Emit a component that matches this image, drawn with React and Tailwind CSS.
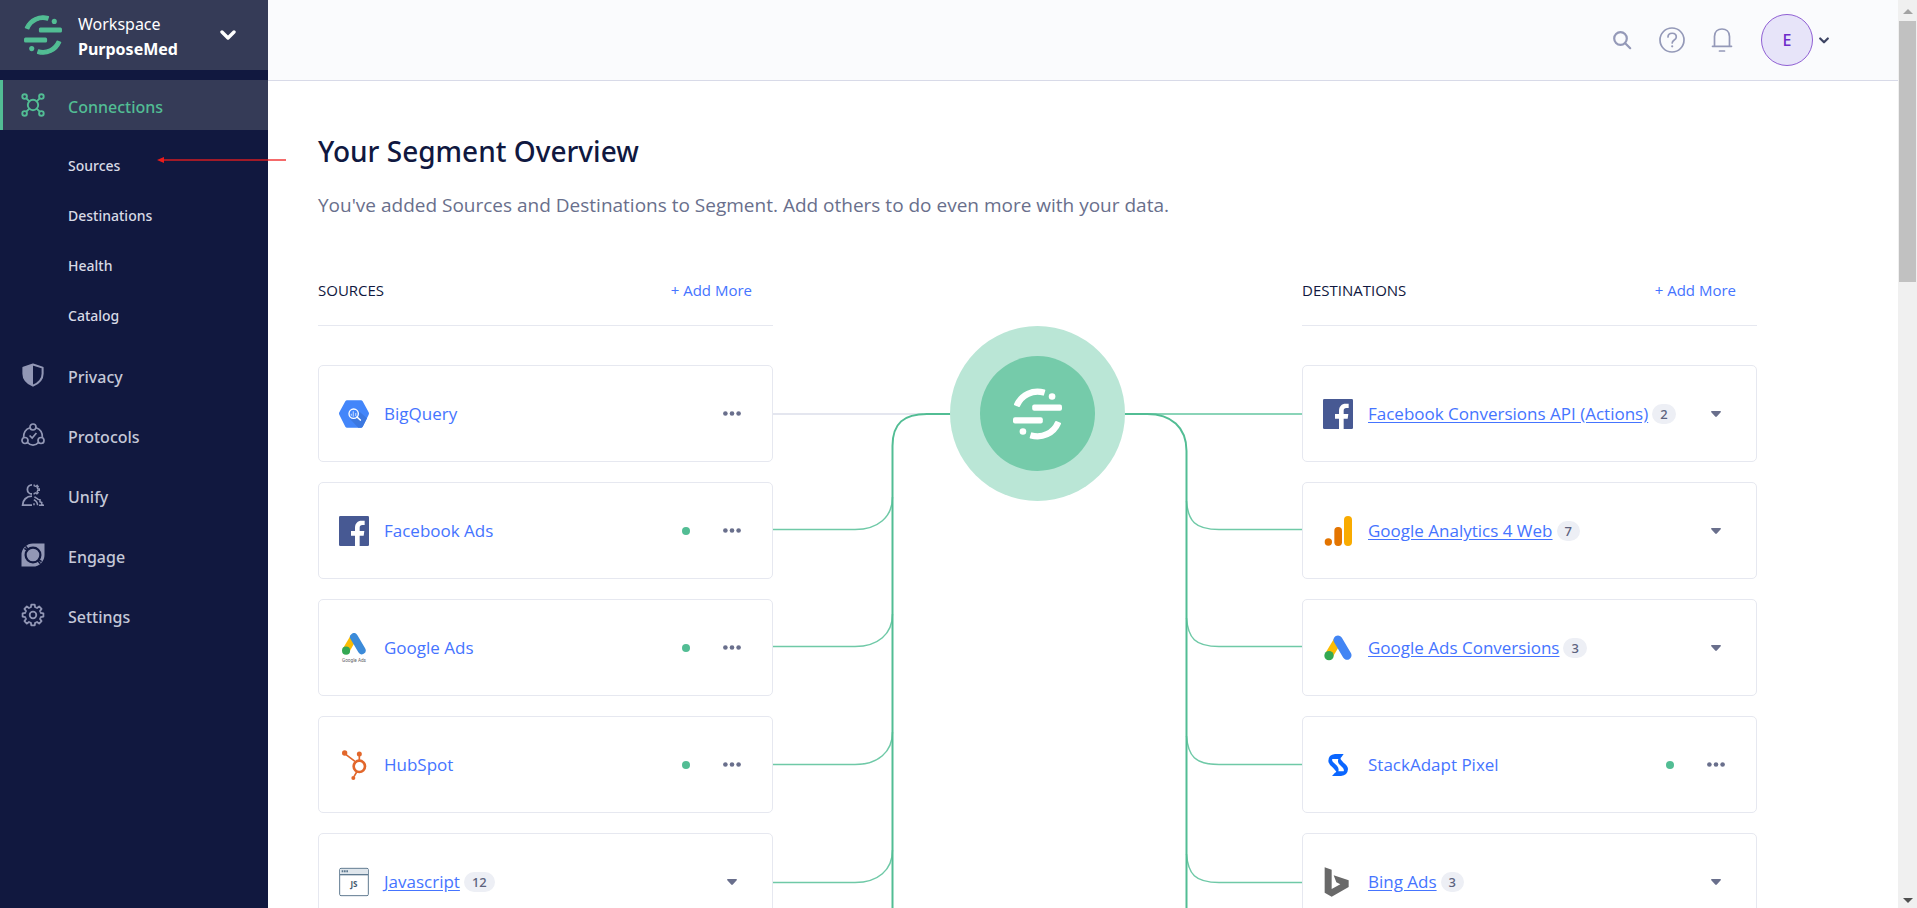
import React from "react";

function SegmentMark({ className }) {
  return (
    <svg viewBox="0 0 148 156" fill="currentColor" stroke="currentColor" className={className} aria-hidden="true">
      <g strokeWidth="5" strokeLinejoin="round">
        <path d="M5.4 48.9A74.5 74.5 0 0 1 95.2 6.6L91.2 20A60.5 60.5 0 0 0 18.3 54.4Z" />
        <path d="M142.6 107.1A74.5 74.5 0 0 1 52.8 149.4L56.8 136A60.5 60.5 0 0 0 129.7 101.6Z" />
      </g>
      <g stroke="none">
        <rect x="58" y="49" width="90" height="19" rx="6" />
        <rect x="0" y="88" width="90" height="19" rx="6" />
        <circle cx="118" cy="25" r="10" />
        <circle cx="30" cy="131" r="10" />
      </g>
    </svg>
  );
}

function ConnectionsIcon() {
  return (
    <svg viewBox="0 0 24 24" fill="none" stroke="currentColor" strokeWidth="1.9" className="size-6" aria-hidden="true">
      <circle cx="12" cy="12" r="5.2" />
      <circle cx="3.6" cy="3.6" r="2.3" />
      <circle cx="20.4" cy="3.6" r="2.3" />
      <circle cx="3.6" cy="20.4" r="2.3" />
      <circle cx="20.4" cy="20.4" r="2.3" />
      <path d="M5.3 5.3l3 3M18.7 5.3l-3 3M5.3 18.7l3-3M18.7 18.7l-3-3" />
    </svg>
  );
}

function PrivacyIcon() {
  return (
    <svg viewBox="0 0 24 26" className="size-6" aria-hidden="true">
      <path d="M12 1.6L22.4 5v6.6c0 5.8-4.4 10.3-10.4 12.9C6 21.9 1.6 17.4 1.6 11.6V5z" fill="none" stroke="currentColor" strokeWidth="2.2" strokeLinejoin="round" />
      <path d="M12 1.6L1.6 5v6.6c0 5.8 4.4 10.3 10.4 12.9z" fill="currentColor" />
    </svg>
  );
}

function ProtocolsIcon() {
  return (
    <svg viewBox="0 0 24 24" fill="none" stroke="currentColor" strokeWidth="1.7" className="size-6" aria-hidden="true">
      <circle cx="12" cy="4" r="3" />
      <circle cx="4" cy="17.5" r="3" />
      <circle cx="20" cy="17.5" r="3" />
      <path d="M9 4.8C5 6.2 2.4 9.600 2.600 14.6M15 4.8c4 1.4 6.6 4.8 6.4 9.8M6.6 19.5c3 3.6 7.8 3.6 10.8 0M8.600 12.5l2.6 2.6 4.2-5.1" />
    </svg>
  );
}

function UnifyIcon() {
  return (
    <svg viewBox="0 0 24 24" fill="none" stroke="currentColor" strokeWidth="1.8" className="size-6" aria-hidden="true">
      <path d="M11 1.8a4.6 4.6 0 0 0 0 9.2" />
      <path d="M13.2 1.5v1.3l1.9.6 1-1 1.1 1.3-1 1 .5 1.2h1.6v1.5h-1.6l-.5 1.2.9 1-1.2 1.2-1-.9-1.7.6v1" strokeWidth="1.4" />
      <path d="M11 13.2C5.4 13.2 1.8 17 1.6 22.2H11" />
      <path d="M13.5 13.6c.8 1.4 3.2 1.6 3.6 2.8l2 .4-.2 2 1.9.8-.2 1.9 1.7.8M12.8 16.8c2 .8 3.6 2.6 3.8 5.4M18 22.2h5M13 20.2v2" strokeWidth="1.5" />
    </svg>
  );
}

function EngageIcon() {
  return (
    <svg viewBox="0 0 24 24" className="size-6" aria-hidden="true">
      <path d="M.5 23.5V12A11.5 11.5 0 0 1 12 .5h11.5V12A11.5 11.5 0 0 1 12 23.5z" fill="currentColor" />
      <circle cx="12" cy="12" r="7.4" fill="none" stroke="#11183f" strokeWidth="2.2" />
      <path d="M3.4 5.4l2.6 1.8M20.6 18.600l-2.600-1.800M4.600 3.200l2.400 2.800M19.400 20.800l-2.400-2.800" stroke="#11183f" strokeWidth="1.6" />
    </svg>
  );
}

function GearIcon() {
  const teeth = [0, 45, 90, 135, 180, 225, 270, 315];
  return (
    <svg viewBox="0 0 24 24" fill="none" stroke="currentColor" strokeWidth="1.8" className="size-6" aria-hidden="true">
      <circle cx="12" cy="12" r="3.3" />
      {teeth.map((a) => (
        <path key={a} transform={`rotate(${a} 12 12)`} d="M8.9 4.5L9.9 4.2L10.3 1.6H13.7L14.1 4.2L15.1 4.5" strokeLinejoin="round" />
      ))}
    </svg>
  );
}

function BigQueryLogo() {
  return (
    <svg viewBox="0 0 90 90" className="size-[30px]" aria-hidden="true">
      <path d="M24 4h42q3 0 5 3l18 33q2 4 0 7L71 83q-2 3-5 3H24q-3 0-5-3L1 47q-2-4 0-7L19 7q2-3 5-3z" fill="#4386fa" />
      <path d="M58 35L84 58 71 83q-2 3-5 3H58L33 60z" fill="#3c78e0" />
      <circle cx="44" cy="44" r="14" fill="#4386fa" stroke="#fff" strokeWidth="4" />
      <path d="M37 44v6M43 37v16M50 42v9" stroke="#a9c8fd" strokeWidth="4" />
      <path d="M54 54l10 9" stroke="#fff" strokeWidth="5" strokeLinecap="round" />
    </svg>
  );
}

function FacebookLogo() {
  return (
    <svg viewBox="0 0 90 90" className="size-[30px]" aria-hidden="true">
      <rect width="90" height="90" rx="4" fill="#475993" />
      <path d="M48 90V59H36V45H48V35C48 22 56 14 68 14H77V27H70Q62 27 62 35V45H76L74 59H62V90z" fill="#fff" />
    </svg>
  );
}

function AdsShape({ blue }) {
  return (
    <>
      <path d="M41 15L15 59" stroke="#fbbc04" strokeWidth="25" />
      <path d="M41 15L68 61" stroke={blue} strokeWidth="27" strokeLinecap="round" />
      <circle cx="14" cy="62" r="14" fill="#34a853" />
    </>
  );
}

function GoogleAdsLabelledLogo() {
  return (
    <svg viewBox="0 0 90 90" className="size-[30px]" aria-hidden="true">
      <g transform="translate(9 -1) scale(.87)" fill="none">
        <AdsShape blue="#3c8bd9" />
      </g>
      <text x="45" y="87" textAnchor="middle" fontSize="14" fill="#5f6368" fontFamily="Roboto, sans-serif">
        Google Ads
      </text>
    </svg>
  );
}

function GoogleAdsLogo() {
  return (
    <svg viewBox="0 0 90 90" className="size-[30px]" fill="none" aria-hidden="true">
      <g transform="translate(4 6)">
        <AdsShape blue="#4285f4" />
      </g>
    </svg>
  );
}

function AnalyticsLogo() {
  return (
    <svg viewBox="0 0 90 90" className="size-[30px]" aria-hidden="true">
      <circle cx="16" cy="78" r="11" fill="#e37400" />
      <rect x="34" y="33" width="23" height="57" rx="11" fill="#e37400" />
      <rect x="63" y="0" width="24" height="90" rx="12" fill="#f9ab00" />
    </svg>
  );
}

function HubSpotLogo() {
  return (
    <svg viewBox="0 0 90 90" className="size-[30px]" fill="none" stroke="#e2672b" aria-hidden="true">
      <circle cx="61" cy="49" r="17" strokeWidth="8" />
      <path d="M16 10L48 34M61 16V30M53 66L45 80" strokeWidth="5" />
      <g fill="#e2672b" stroke="none">
        <circle cx="17" cy="9" r="8" />
        <circle cx="61" cy="12" r="7.5" />
        <circle cx="43" cy="84" r="6" />
      </g>
    </svg>
  );
}

function JavascriptLogo() {
  return (
    <svg viewBox="0 0 90 90" className="size-[30px]" aria-hidden="true">
      <rect x="2" y="4" width="86" height="82" rx="4" fill="#fff" stroke="#5f7a90" strokeWidth="3" />
      <path d="M3 6h84v16H3z" fill="#dfe6ec" />
      <path d="M3 23h84" stroke="#5f7a90" strokeWidth="4" />
      <path d="M8 13h20" stroke="#5f7a90" strokeWidth="6" strokeDasharray="5 2" />
      <text x="45" y="61" textAnchor="middle" fontSize="24" fontWeight="700" fill="#455a6e" fontFamily="'Noto Sans', sans-serif">
        JS
      </text>
    </svg>
  );
}

function StackAdaptLogo() {
  return (
    <svg viewBox="0 0 90 90" className="size-[30px]" fill="#0a66ff" aria-hidden="true">
      <path d="M62 12H36Q16 14 16 33Q17 44 30 53L39 64Q41 67 36 68L27 78H54Q74 76 75 57Q74 46 62 38L54 29Q51 25 55 22ZM28 27H46Q43 36 48 42L60 54Q64 60 62 64H46Q49 55 42 47L30 36Q26 32 28 27Z" fillRule="evenodd" />
    </svg>
  );
}

function BingLogo() {
  return (
    <svg viewBox="0 0 90 90" className="size-[30px]" fill="#696969" aria-hidden="true">
      <path d="M5 1L26 8V66L52 52L40 46L32 25L77 40V60L26 89L5 77Z" />
    </svg>
  );
}

const NAV = [
  { label: "Privacy", Icon: PrivacyIcon },
  { label: "Protocols", Icon: ProtocolsIcon },
  { label: "Unify", Icon: UnifyIcon },
  { label: "Engage", Icon: EngageIcon },
  { label: "Settings", Icon: GearIcon },
];

const SOURCES = [
  { name: "BigQuery", Logo: BigQueryLogo },
  { name: "Facebook Ads", Logo: FacebookLogo, live: true },
  { name: "Google Ads", Logo: GoogleAdsLabelledLogo, live: true },
  { name: "HubSpot", Logo: HubSpotLogo, live: true },
  { name: "Javascript", Logo: JavascriptLogo, count: 12 },
];

const DESTINATIONS = [
  { name: "Facebook Conversions API (Actions)", Logo: FacebookLogo, count: 2 },
  { name: "Google Analytics 4 Web", Logo: AnalyticsLogo, count: 7 },
  { name: "Google Ads Conversions", Logo: GoogleAdsLogo, count: 3 },
  { name: "StackAdapt Pixel", Logo: StackAdaptLogo, live: true },
  { name: "Bing Ads", Logo: BingLogo, count: 3 },
];

function Sidebar() {
  return (
    <aside className="flex w-[268px] shrink-0 flex-col bg-[#11183f] font-['Noto_Sans',sans-serif]">
      <button type="button" className="flex h-[70px] shrink-0 items-center bg-[#353b57] pl-6 pr-8 text-left text-base leading-[25px] text-white">
        <SegmentMark className="h-10 w-[38px] text-[#52bd94]" />
        <span className="ml-4 mt-1 flex-1">
          <span className="block">Workspace</span>
          <span className="block font-bold">PurposeMed</span>
        </span>
        <svg viewBox="0 0 16 10" className="h-[10px] w-4" fill="none" stroke="currentColor" strokeWidth="3.4" strokeLinecap="round" strokeLinejoin="round" aria-hidden="true">
          <path d="M2 2l6 6 6-6" />
        </svg>
      </button>
      <nav className="pt-[10px] font-medium">
        <a href="#connections" className="flex h-[50px] items-center gap-[23px] border-l-[3px] border-[#52bd94] bg-[#353b57] pl-[18px] text-base text-[#52bd94]">
          <ConnectionsIcon />
          <span className="pt-1">Connections</span>
        </a>
        <ul className="pb-[9px] pt-[11px] text-sm text-[#d8dae5]">
          {["Sources", "Destinations", "Health", "Catalog"].map((label) => (
            <li key={label}>
              <a href="#connections" className="flex h-[50px] items-center pl-[68px]">
                {label}
              </a>
            </li>
          ))}
        </ul>
        <ul className="-mt-[5px] text-base text-[#c5c8d8]">
          {NAV.map(({ label, Icon }) => (
            <li key={label}>
              <a href="#section" className="flex h-[60px] items-center gap-[23px] pl-[21px]">
                <span className="text-[#9297b5]">
                  <Icon />
                </span>
                <span className="pt-1">{label}</span>
              </a>
            </li>
          ))}
        </ul>
      </nav>
    </aside>
  );
}

function Header() {
  return (
    <header className="flex h-[81px] shrink-0 items-center justify-end border-b border-[#d8dae8] bg-[#fafbfd] pr-[69px] text-[#9499b8]">
      <button type="button" aria-label="Search">
        <svg viewBox="0 0 20 20" className="size-5" fill="none" stroke="currentColor" strokeWidth="2.2" strokeLinecap="round" aria-hidden="true">
          <circle cx="8.5" cy="8.5" r="6.3" />
          <path d="M13.2 13.2l5 5" />
        </svg>
      </button>
      <button type="button" aria-label="Help" className="ml-[27px]">
        <svg viewBox="0 0 26 26" className="size-[26px]" fill="none" stroke="currentColor" strokeWidth="1.7" strokeLinecap="round" aria-hidden="true">
          <circle cx="13" cy="13" r="12" />
          <path d="M9 10c0-5 8.300-5 8.300 0 0 3.2-4.100 2.800-4.100 6" />
          <circle cx="13.2" cy="19.3" r="1.1" fill="currentColor" stroke="none" />
        </svg>
      </button>
      <button type="button" aria-label="Notifications" className="ml-[26px]">
        <svg viewBox="0 0 22 26" className="h-[26px] w-[22px]" fill="none" stroke="currentColor" strokeWidth="1.7" strokeLinecap="round" aria-hidden="true">
          <path d="M3.5 19V9.5C3.5 4.5 7 2 11 2s7.5 2.5 7.5 7.5V19M1.5 19.3h19M8.5 24h5" />
        </svg>
      </button>
      <button type="button" aria-label="Account" className="ml-7 flex items-center gap-[6px]">
        <span className="flex size-[52px] items-center justify-center rounded-full border border-[#9060d4] bg-[#e7e4f9] font-['Noto_Sans',sans-serif] text-base font-medium text-[#6e2bc9]">
          E
        </span>
        <svg viewBox="0 0 10 7" className="h-[7px] w-[10px] text-[#3d4463]" fill="none" stroke="currentColor" strokeWidth="2.2" strokeLinecap="round" strokeLinejoin="round" aria-hidden="true">
          <path d="M1.2 1.5L5 5.3l3.8-3.8" />
        </svg>
      </button>
    </header>
  );
}

function Card({ name, Logo, count, live }) {
  return (
    <li className="flex h-[97px] items-center rounded-[5px] border border-[#e6e8f0] bg-white pl-5 pr-6">
      <Logo />
      <a href="#item" className={count ? "ml-[15px] text-[17px] text-[#4574ff] underline underline-offset-2" : "ml-[15px] text-[17px] text-[#4574ff]"}>
        {name}
      </a>
      {count && <span className="ml-1 rounded-full bg-[#edeff5] px-2 font-['Noto_Sans',sans-serif] text-[13px] font-medium leading-5 text-[#5c627d]">{count}</span>}
      <span className="flex-1" />
      {live && <span className="mr-[26px] size-2 rounded-full bg-[#52bd94]" />}
      <button type="button" aria-label={`${name} options`} className="flex size-8 items-center justify-center text-[#696f8c]">
        {count ? (
          <svg viewBox="0 0 10 6" className="h-[6px] w-[10px]" fill="currentColor" aria-hidden="true">
            <path d="M.8 0h8.400c.7 0 1 .8.5 1.300L5.800 5.500c-.5.5-1.100.5-1.600 0L.3 1.300C-.2.8.1 0 .8 0z" />
          </svg>
        ) : (
          <svg viewBox="0 0 18 5" className="h-[5px] w-[18px]" fill="currentColor" aria-hidden="true">
            <circle cx="2.4" cy="2.5" r="2.3" />
            <circle cx="9" cy="2.5" r="2.3" />
            <circle cx="15.6" cy="2.5" r="2.3" />
          </svg>
        )}
      </button>
    </li>
  );
}

function Column({ title, items }) {
  return (
    <section>
      <div className="flex items-center justify-between border-b border-[#e6e8f0] pb-[25px] pr-[21px] text-[15px] leading-5">
        <h2 className="text-[#101840]">{title}</h2>
        <a href="#add" className="text-[#4574ff]">
          + Add More
        </a>
      </div>
      <ul className="mt-[39px] flex flex-col gap-5">
        {items.map((item) => (
          <Card key={item.name} {...item} />
        ))}
      </ul>
    </section>
  );
}

function Flow() {
  const rows = [249, 366, 484, 602];
  return (
    <div className="grid justify-items-center">
      <svg viewBox="0 0 529 700" preserveAspectRatio="none" className="col-start-1 row-start-1 h-[700px] w-full" fill="none" aria-hidden="true">
        <path d="M0 134H150" stroke="#e4e6ef" strokeWidth="2" />
        <path d="M370 134H529" stroke="#8ad4b8" strokeWidth="2" />
        {rows.map((y) => (
          <g key={y} stroke="#6fc9a7" strokeWidth="1.5">
            <path d={`M0 ${y}.5H82C105 ${y}.5 119.5 ${y - 12} 119.5 ${y - 32}`} />
            <path d={`M413.5 ${y - 28}C415 ${y - 8} 422 ${y}.5 446 ${y}.5H529`} />
          </g>
        ))}
        <g stroke="#52bd94" strokeWidth="2">
          <path d="M265 134H154C131 134 119.5 143 119.5 166V700" />
          <path d="M265 134H374C398 134 413.5 147 413.5 171V700" />
        </g>
      </svg>
      <div className="col-start-1 row-start-1 mt-[46px] flex size-[175px] items-center justify-center rounded-full bg-[#bae6d6]">
        <div className="flex size-[115px] items-center justify-center rounded-full bg-[#75cbaa]">
          <SegmentMark className="h-[52px] w-[49px] text-white" />
        </div>
      </div>
    </div>
  );
}

function PageScrollbar() {
  return (
    <div className="flex w-[19px] shrink-0 flex-col items-center bg-[#f0f0f0]" aria-hidden="true">
      <div className="flex h-[21px] items-center pt-[2px]">
        <svg viewBox="0 0 10 5" className="h-[5px] w-[10px]" fill="#a3a3a3">
          <path d="M0 5l5-5 5 5z" />
        </svg>
      </div>
      <div className="h-[261px] w-[17px] bg-[#c1c1c1]" />
      <div className="flex flex-1 items-end pb-[5px]">
        <svg viewBox="0 0 10 5" className="h-[5px] w-[10px]" fill="#505050">
          <path d="M0 0l5 5 5-5z" />
        </svg>
      </div>
    </div>
  );
}

export default function App() {
  return (
    <div className="relative flex h-screen overflow-hidden bg-white font-['Open_Sans',sans-serif]">
      <Sidebar />
      <div className="flex min-w-0 flex-1 flex-col">
        <Header />
        <main className="min-h-0 flex-1 overflow-hidden pl-[50px] pr-[141px] pt-[50px]">
          <h1 className="font-['Noto_Sans',sans-serif] text-[28px] font-medium leading-10 text-[#101840]">Your Segment Overview</h1>
          <p className="mt-5 text-[19px] leading-7 text-[#696f8c]">
            You've added Sources and Destinations to Segment. Add others to do even more with your data.
          </p>
          <div className="mt-[61px] grid grid-cols-[455fr_529fr_455fr]">
            <Column title="SOURCES" items={SOURCES} />
            <Flow />
            <Column title="DESTINATIONS" items={DESTINATIONS} />
          </div>
        </main>
      </div>
      <PageScrollbar />
      <svg viewBox="0 0 130 8" className="absolute left-[157px] top-[156px] h-2 w-[130px]" aria-hidden="true">
        <path d="M6 4H129" stroke="#f01c1c" strokeOpacity=".65" strokeWidth="2" />
        <path d="M0 4L7 1V7z" fill="#e81c1c" />
      </svg>
    </div>
  );
}
